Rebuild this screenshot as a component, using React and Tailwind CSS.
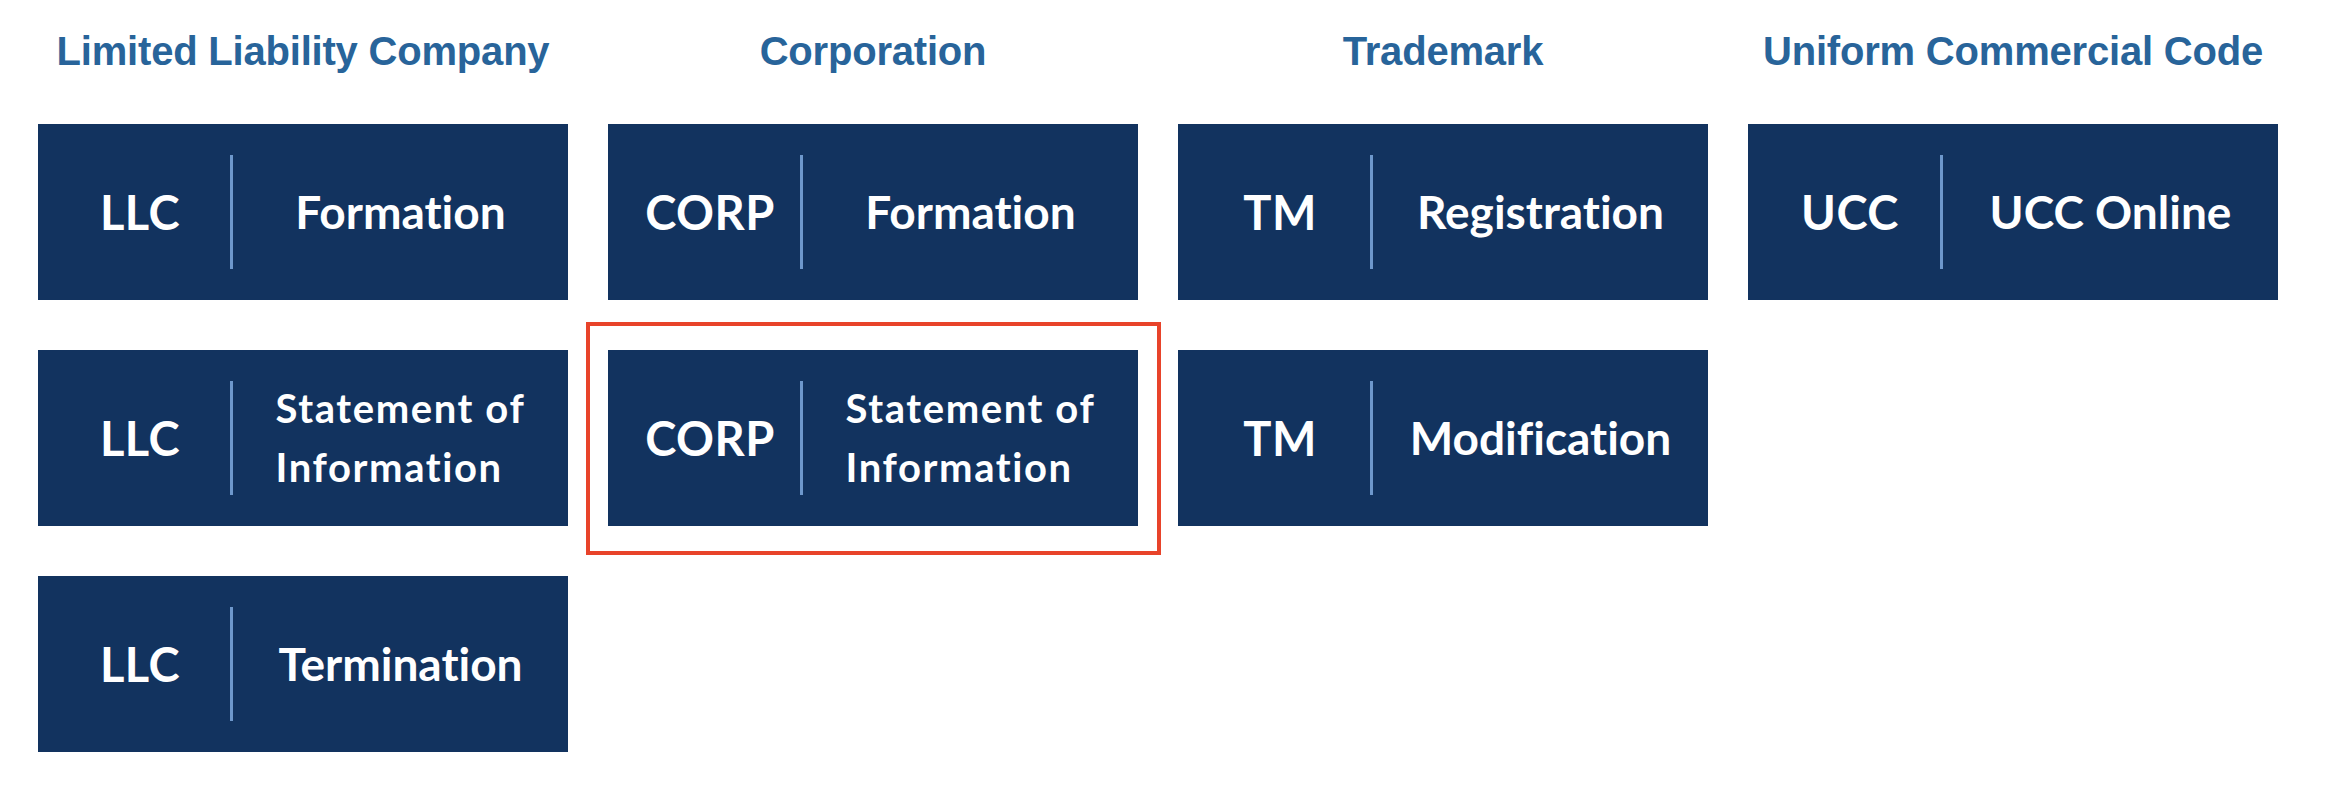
import React from "react";

const sections = [
  {
    title: "Limited Liability Company",
    items: [
      { tag: "LLC", label: ["Formation"] },
      { tag: "LLC", label: ["Statement of", "Information"] },
      { tag: "LLC", label: ["Termination"] },
    ],
  },
  {
    title: "Corporation",
    items: [
      { tag: "CORP", label: ["Formation"] },
      { tag: "CORP", label: ["Statement of", "Information"], highlighted: true },
    ],
  },
  {
    title: "Trademark",
    items: [
      { tag: "TM", label: ["Registration"] },
      { tag: "TM", label: ["Modification"] },
    ],
  },
  {
    title: "Uniform Commercial Code",
    items: [{ tag: "UCC", label: ["UCC Online"] }],
  },
];

const tileFont = { fontFamily: "Lato, 'Open Sans', sans-serif" };

function Tile({ tag, label, highlighted }) {
  const twoLine = label.length > 1;
  return (
    <div className="relative">
      {highlighted && (
        <div className="pointer-events-none absolute -left-[22px] -right-[23px] -top-[28px] -bottom-[29px] border-4 border-[#e8432a]" />
      )}
      <a
        href="#"
        className="flex h-[176px] w-[530px] items-center bg-[#12335f] text-white antialiased [font-variant-ligatures:none]"
        style={tileFont}
      >
        <div className="w-[192px] pl-[12px] text-center text-[47px] font-bold leading-none tracking-[0.5px]">
          {tag}
        </div>
        <div className="h-[114px] w-[3px] bg-[#6e98cc]" />
        <div className="flex flex-1 justify-center">
          {twoLine ? (
            <div className="text-left text-[40px] font-bold leading-[59px] tracking-[1.6px]">
              {label.map((l) => (
                <div key={l}>{l}</div>
              ))}
            </div>
          ) : (
            <div className="text-[46px] font-bold leading-none">{label[0]}</div>
          )}
        </div>
      </a>
    </div>
  );
}

export default function App() {
  return (
    <div className="min-h-[794px] w-[2330px] bg-white">
      <div className="grid w-[2240px] grid-cols-4 gap-x-[40px] pl-[38px] pt-[31px] box-content">
        {sections.map((s) => (
          <div key={s.title} className="flex flex-col items-center">
            <h2
              className="mb-[53px] text-center text-[40px] font-bold leading-[40px] tracking-[-0.2px] text-[#28649a]"
              style={{ fontFamily: "'Liberation Sans', Arial, sans-serif" }}
            >
              {s.title}
            </h2>
            <div className="flex flex-col gap-[50px]">
              {s.items.map((it, i) => (
                <Tile key={i} {...it} />
              ))}
            </div>
          </div>
        ))}
      </div>
    </div>
  );
}
